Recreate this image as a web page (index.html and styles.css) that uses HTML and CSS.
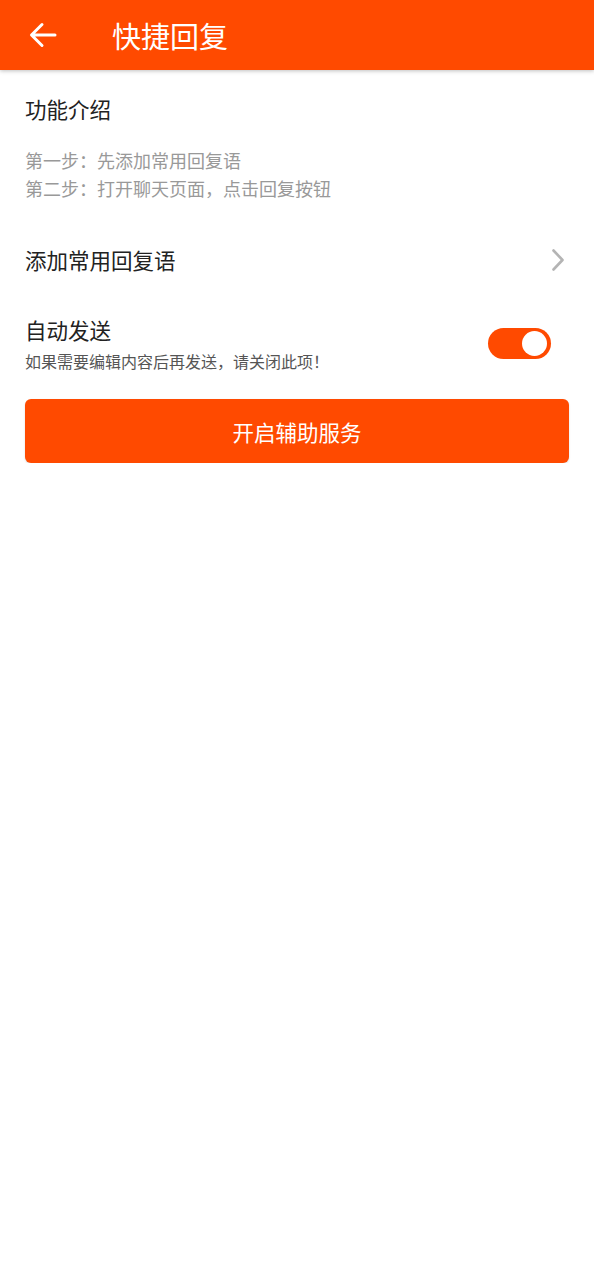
FILE: index.html
```html
<!DOCTYPE html>
<html lang="zh">
<head>
<meta charset="utf-8">
<link rel="stylesheet" href="styles.css">
</head>
<body>
<header class="appbar">
  <span class="back">
    <svg width="28" height="26" viewBox="0 0 28 26"><path d="M26 13H3M13 2.5L2.5 13 13 23.5" fill="none" stroke="#fff" stroke-width="3" stroke-linecap="round" stroke-linejoin="round"/></svg>
  </span>
  <h1 class="title">快捷回复</h1>
</header>
<main class="content">
  <section class="intro">
    <h2 class="intro-title">功能介绍</h2>
    <p class="steps">第一步：先添加常用回复语<br>第二步：打开聊天页面，点击回复按钮</p>
  </section>
  <div class="row link-row">
    <span class="row-label">添加常用回复语</span>
    <svg class="chevron" width="14" height="24" viewBox="0 0 14 24"><path d="M2.5 2.5L11.5 12 2.5 21.5" fill="none" stroke="#b4b4b4" stroke-width="2.6" stroke-linecap="round" stroke-linejoin="round"/></svg>
  </div>
  <div class="row toggle-row">
    <div class="toggle-text">
      <span class="row-label">自动发送</span>
      <span class="hint">如果需要编辑内容后再发送，请关闭此项！</span>
    </div>
    <span class="switch"><span class="knob"></span></span>
  </div>
  <button class="primary">开启辅助服务</button>
</main>
</body>
</html>
```
FILE: styles.css
```css
html, body {
  margin: 0;
  padding: 0;
  background: #ffffff;
  font-family: "Noto Sans CJK SC", "Noto Sans", sans-serif;
}
.appbar {
  height: 70px;
  background: #ff4a00;
  display: flex;
  align-items: center;
  box-shadow: 0 1px 4px rgba(0, 0, 0, 0.25);
  position: relative;
}
.back {
  width: 28px;
  height: 26px;
  margin-left: 29px;
  display: flex;
}
.title {
  margin: 0 0 0 55px;
  color: #fff;
  font-size: 29px;
  font-weight: 400;
  line-height: 1;
}
.content {
  padding: 0 25px;
}
.intro {
  padding-top: 24px;
}
.intro-title {
  margin: 0;
  font-size: 21.5px;
  font-weight: 400;
  color: #222;
  line-height: 30px;
}
.steps {
  margin: 22px 0 0;
  font-size: 18px;
  line-height: 28px;
  color: #999;
}
.row {
  display: flex;
  align-items: center;
  justify-content: space-between;
}
.link-row {
  margin-top: 38px;
  height: 40px;
}
.row-label {
  font-size: 21.5px;
  color: #222;
  line-height: 30px;
}
.chevron {
  margin-right: 4px;
}
.toggle-row {
  margin-top: 35px;
}
.toggle-text {
  display: flex;
  flex-direction: column;
}
.hint {
  font-size: 16px;
  color: #555;
  line-height: 22px;
  margin-top: 5px;
}
.switch {
  width: 63px;
  height: 31px;
  border-radius: 16px;
  background: #ff4a00;
  display: flex;
  align-items: center;
  justify-content: flex-end;
  margin-right: 18px;
}
.knob {
  width: 25px;
  height: 25px;
  border-radius: 50%;
  background: #fff;
  margin-right: 4px;
}
.primary {
  display: block;
  width: 100%;
  height: 64px;
  margin-top: 27px;
  border: none;
  border-radius: 6px;
  background: #ff4a00;
  color: #fff;
  font-family: "Noto Sans CJK SC", "Noto Sans", sans-serif;
  font-size: 21.5px;
  box-shadow: 0 1px 2px rgba(0, 0, 0, 0.15);
}
```
